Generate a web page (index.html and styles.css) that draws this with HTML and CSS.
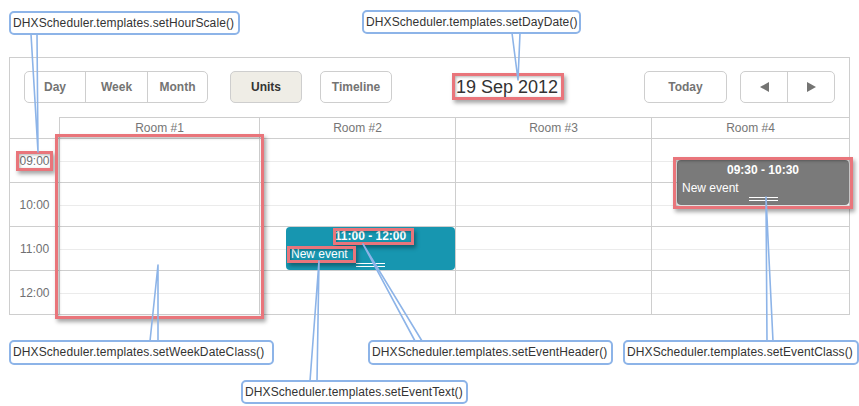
FILE: index.html
```html
<!DOCTYPE html>
<html>
<head>
<meta charset="utf-8">
<link rel="stylesheet" href="styles.css">
</head>
<body>
<div class="stage">
  <div class="scheduler">
    <div class="toolbar">
      <div class="btn-group">
        <div class="btn w-day">Day</div>
        <div class="btn w-week">Week</div>
        <div class="btn w-month">Month</div>
      </div>
      <div class="btn btn-single btn-active w-units">Units</div>
      <div class="btn btn-single w-timeline">Timeline</div>
      <div class="date">19 Sep 2012</div>
      <div class="btn btn-single w-today">Today</div>
      <div class="btn-group arrows">
        <div class="btn w-arrow"><span class="tri tri-left"></span></div>
        <div class="btn w-arrow sep"><span class="tri tri-right"></span></div>
      </div>
    </div>
    <div class="head">
      <div class="head-spacer"></div>
      <div class="head-cell c1">Room #1</div>
      <div class="head-cell c2">Room #2</div>
      <div class="head-cell c3">Room #3</div>
      <div class="head-cell c4">Room #4</div>
    </div>
    <div class="body">
      <div class="scale">
        <div class="scale-cell">09:00</div>
        <div class="scale-cell">10:00</div>
        <div class="scale-cell">11:00</div>
        <div class="scale-cell">12:00</div>
      </div>
      <div class="col c1">
        <div class="hour"></div><div class="hour"></div><div class="hour"></div><div class="hour"></div>
      </div>
      <div class="col c2">
        <div class="hour"></div><div class="hour"></div><div class="hour"></div><div class="hour"></div>
        <div class="event event-blue">
          <div class="ev-head">11:00 - 12:00</div>
          <div class="ev-text">New event</div>
          <div class="ev-handle"></div>
        </div>
      </div>
      <div class="col c3">
        <div class="hour"></div><div class="hour"></div><div class="hour"></div><div class="hour"></div>
      </div>
      <div class="col c4">
        <div class="hour"></div><div class="hour"></div><div class="hour"></div><div class="hour"></div>
        <div class="event event-gray">
          <div class="ev-head">09:30 - 10:30</div>
          <div class="ev-text">New event</div>
          <div class="ev-handle"></div>
        </div>
      </div>
    </div>
  </div>

  <div class="hl hl-scale"></div>
  <div class="hl hl-col"></div>
  <div class="hl hl-date"></div>
  <div class="hl hl-evh"></div>
  <div class="hl hl-evt"></div>
  <div class="hl hl-gray"></div>

  <svg class="tails" width="859" height="406" viewBox="0 0 859 406">
    <g stroke="#8db4e8" stroke-width="1.6" fill="none" stroke-linecap="round">
      <path d="M31,34 L38,152 M37,34 L38,152"/>
      <path d="M512,33 L518,80 M520,33 L518,80"/>
      <path d="M150,341 L158,265 M158,341 L158,265"/>
      <path d="M310,381 L319,261 M317,381 L319,261"/>
      <path d="M415,341 L363,244 M422,341 L363,244"/>
      <path d="M767,341 L766,197 M773,341 L766,197"/>
    </g>
  </svg>

  <div class="callout co-hour">DHXScheduler.templates.setHourScale()</div>
  <div class="callout co-day">DHXScheduler.templates.setDayDate()</div>
  <div class="callout co-week">DHXScheduler.templates.setWeekDateClass()</div>
  <div class="callout co-text">DHXScheduler.templates.setEventText()</div>
  <div class="callout co-header">DHXScheduler.templates.setEventHeader()</div>
  <div class="callout co-class">DHXScheduler.templates.setEventClass()</div>
</div>
</body>
</html>
```
FILE: styles.css
```css
* { box-sizing: border-box; }
body { margin: 0; background: #fff; font-family: "Liberation Sans", Arial, sans-serif; }
.stage { position: relative; width: 859px; height: 406px; overflow: hidden; }

.scheduler {
  margin: 57px 0 0 9px;
  width: 841px;
  height: 258px;
  border: 1px solid #cecece;
  display: flex;
  flex-direction: column;
}

.toolbar {
  height: 59px;
  flex: none;
  display: flex;
  align-items: flex-start;
  padding: 13px 14px 0 14px;
}
.btn-group { display: flex; height: 32px; border: 1px solid #cecece; border-radius: 5px; }
.btn {
  display: flex; align-items: center; justify-content: center;
  font-size: 12px; font-weight: bold; color: #747473; height: 30px;
}
.btn-group .btn + .btn { border-left: 1px solid #cecece; }
.btn-single { height: 32px; border: 1px solid #cecece; border-radius: 5px; }
.btn-active { background: #efede6; color: #333; }
.w-day { width: 60px; }
.w-week { width: 62px; }
.w-month { width: 60px; }
.w-units { width: 72px; margin-left: 22px; }
.w-timeline { width: 72px; margin-left: 18px; }
.w-today { width: 83px; margin-left: auto; }
.arrows { margin-left: 13px; width: 95px; }
.w-arrow { width: 46px; }
.w-arrow.sep { width: 47px; }
.date { margin-left: 64px; font-size: 18px; line-height: 32px; color: #333; }
.tri { width: 0; height: 0; border-top: 5px solid transparent; border-bottom: 5px solid transparent; }
.tri-left { border-right: 9px solid #747473; }
.tri-right { border-left: 9px solid #747473; }

.head { display: flex; height: 22px; flex: none; border-bottom: 1px solid #cecece; }
.head-spacer { width: 49px; }
.head-cell {
  border-top: 1px solid #cecece; border-left: 1px solid #cecece;
  font-size: 12px; color: #767676;
  display: flex; align-items: center; justify-content: center;
}
.c1 { width: 200px; }
.c2 { width: 196px; }
.c3 { width: 196px; }
.c4 { width: 198px; }

.body { display: flex; flex: 1; }
.scale { width: 49px; }
.scale-cell {
  height: 44px; border-bottom: 1px solid #cecece;
  display: flex; align-items: center; justify-content: center;
  font-size: 12px; color: #6f6f72;
}
.scale-cell:last-child { border-bottom: 0; height: 43px; }
.col { position: relative; border-left: 1px solid #cecece; }
.hour { height: 44px; border-bottom: 1px solid #cecece; }
.hour::before { content: ""; display: block; height: 22px; border-bottom: 1px solid #ebebeb; }
.hour:nth-child(4) { border-bottom: 0; height: 43px; }

.event { position: absolute; border-radius: 4px; color: #fff; font-size: 12px; }
.event-blue { background: #1796b0; left: 26px; top: 88px; width: 169px; height: 43px; padding-top: 1px; }
.event-gray { background: #7a7a7a; left: 25px; top: 21px; width: 172px; height: 45px; padding-top: 2px; }
.ev-head { font-weight: bold; text-align: center; line-height: 17px; }
.ev-text { line-height: 18px; padding-left: 5px; }
.ev-handle { width: 29px; height: 4px; border-top: 1px solid #fff; border-bottom: 1px solid #fff; margin: 0 auto; }

.hl {
  position: absolute;
  border: 3px solid #e9757b;
  box-shadow: 2px 3px 4px rgba(0,0,0,0.35), inset 1px 1px 3px rgba(0,0,0,0.3);
}
.hl-scale { left: 16px; top: 151px; width: 37px; height: 20px; }
.hl-col { left: 55px; top: 134px; width: 209px; height: 185px; }
.hl-date { left: 452px; top: 73px; width: 112px; height: 27px; }
.hl-evh { left: 333px; top: 228px; width: 81px; height: 17px; }
.hl-evt { left: 287px; top: 246px; width: 69px; height: 17px; }
.hl-gray { left: 673px; top: 157px; width: 180px; height: 52px; }

.tails { position: absolute; left: 0; top: 0; }

.callout {
  position: absolute;
  height: 24px;
  padding: 0 2px;
  border: 2px solid #8db4e8;
  border-radius: 5px;
  background: #fff;
  font-size: 12px;
  line-height: 20px;
  letter-spacing: 0.1px;
  color: #333;
  white-space: nowrap;
}
.co-hour { left: 9px; top: 11px; width: 231px; }
.co-day { left: 362px; top: 10px; width: 219px; }
.co-week { left: 9px; top: 340px; width: 265px; height: 25px; line-height: 21px; }
.co-text { left: 241px; top: 380px; width: 227px; }
.co-header { left: 368px; top: 340px; width: 245px; height: 25px; line-height: 21px; }
.co-class { left: 623px; top: 340px; width: 236px; height: 25px; line-height: 21px; }
```
